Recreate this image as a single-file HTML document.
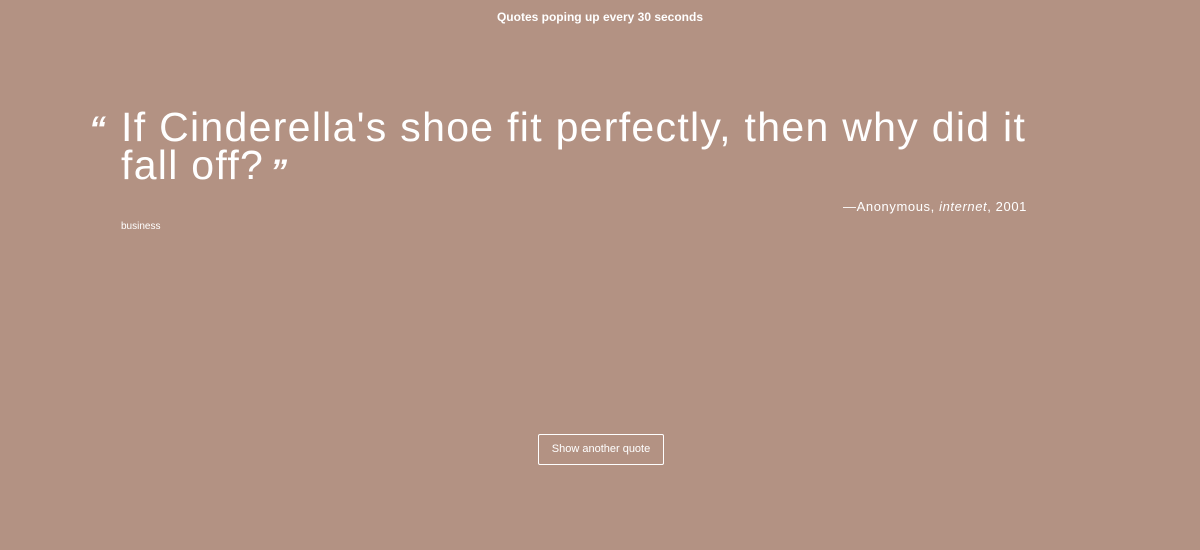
<!DOCTYPE html>
<html><head><meta charset="utf-8"><style>
html,body{margin:0;padding:0;width:1200px;height:550px;overflow:hidden;background:#b39283;font-family:"Liberation Sans",sans-serif;color:#fff}
.title{position:absolute;top:10px;left:0;width:1200px;text-align:center;font-weight:bold;font-size:12px}
.q{position:absolute;left:121px;top:108px;width:935px;font-size:41px;line-height:38px;letter-spacing:1.3px}
.oq,.cq{font-style:italic;font-weight:bold;font-size:34px;position:absolute}
.oq{left:-32px;top:2px}
.cq{position:relative;top:4px;margin-left:6px}
.attr{position:absolute;right:173px;top:199px;font-size:13px;letter-spacing:0.6px}
.tag{position:absolute;left:121px;top:221px;font-size:10px}
.btn{position:absolute;left:538px;top:434px;width:124px;height:29px;border:1px solid #fff;border-radius:2px;font-size:11px;text-align:center;line-height:29px}
</style></head><body>
<div class="title">Quotes poping up every 30 seconds</div>
<div class="q"><span class="oq">“</span>If Cinderella's shoe fit perfectly, then why did it fall off?<span class="cq">”</span></div>
<div class="attr">—Anonymous, <i>internet</i>, 2001</div>
<div class="tag">business</div>
<div class="btn">Show another quote</div>
</body></html>
